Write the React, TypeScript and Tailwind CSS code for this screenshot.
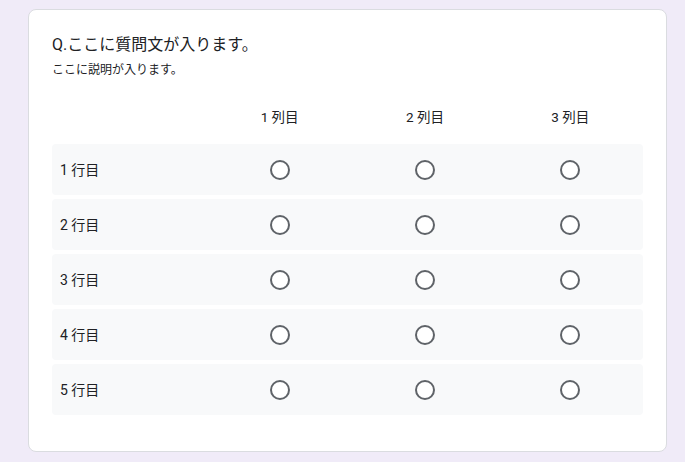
const rows = ["1 行目", "2 行目", "3 行目", "4 行目", "5 行目"];
const cols = ["1 列目", "2 列目", "3 列目"];

function Radio() {
  return (
    <span className="block w-5 h-5 rounded-full border-2 border-[#5f6368] bg-white" />
  );
}

export default function App() {
  return (
    <div
      className="min-h-screen bg-[#f0ebf8] pt-[9px] pl-[28px]"
      style={{ fontFamily: 'Roboto, "Noto Sans CJK JP", sans-serif' }}
    >
      <div className="w-[639px] bg-white border border-[#dadce0] rounded-lg px-[23px] pt-[23px] pb-[36px] text-[#202124]">
        <h1 className="text-[16px] leading-6">Q.ここに質問文が入ります。</h1>
        <p className="mt-1 text-[12px] leading-[18px]">ここに説明が入ります。</p>

        <div className="mt-[14px] flex flex-col gap-1">
          {/* 列見出し */}
          <div className="grid grid-cols-[155px_repeat(3,1fr)] h-[47px] items-center">
            <div />
            {cols.map((c) => (
              <div key={c} className="text-center text-[13.5px] leading-5">
                {c}
              </div>
            ))}
          </div>

          {/* 行 */}
          {rows.map((r) => (
            <div
              key={r}
              className="grid grid-cols-[155px_repeat(3,1fr)] h-[51px] items-center bg-[#f8f9fa] rounded-sm"
            >
              <div className="pl-2 text-[14px] leading-5">{r}</div>
              {cols.map((c) => (
                <div key={c} className="flex justify-center">
                  <Radio />
                </div>
              ))}
            </div>
          ))}
        </div>
      </div>
    </div>
  );
}
